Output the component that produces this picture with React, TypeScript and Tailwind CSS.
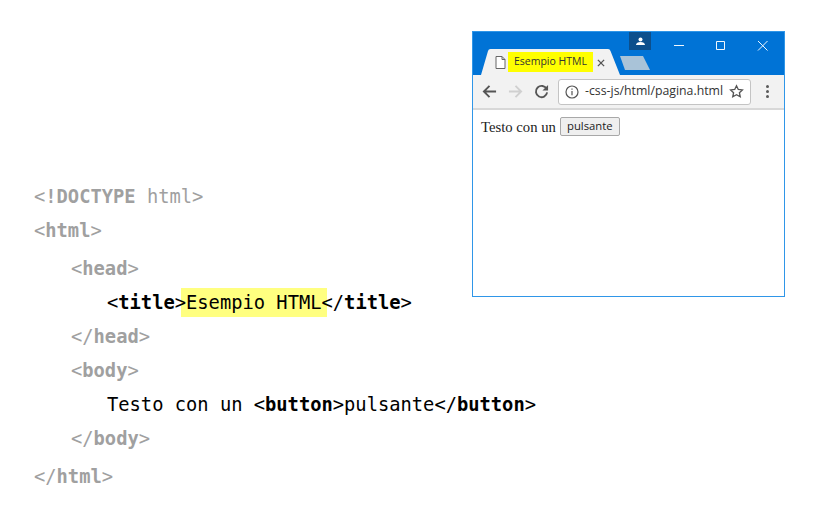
const mono = "font-['DejaVu_Sans_Mono',monospace] text-[18.75px] leading-[26px] whitespace-pre";

function Tag({ open = '<', name, close = '>', dark = false }: { open?: string; name: string; close?: string; dark?: boolean }) {
  return (
    <span className={dark ? 'text-black' : 'text-[#a0a0a0]'}>
      {open}
      <span className={dark ? 'font-bold text-black' : 'font-bold text-[#a0a0a0]'}>{name}</span>
      {close}
    </span>
  );
}

function Toolbar() {
  return (
    <div className="flex h-[35px] items-center border-b-2 border-[#d8d8d8] bg-[#f2f2f2]">
      <svg className="ml-[9px] h-[15px] w-[15px]" viewBox="0 0 16 16" fill="none" stroke="#555" strokeWidth="2">
        <path d="M15 8H2M8 2 2 8l6 6" />
      </svg>
      <svg className="ml-[11px] h-[15px] w-[15px]" viewBox="0 0 16 16" fill="none" stroke="#d0d0d0" strokeWidth="2">
        <path d="M1 8h13M8 2l6 6-6 6" />
      </svg>
      <svg className="ml-[11px] h-[15px] w-[15px]" viewBox="0 0 16 16" fill="none" stroke="#555" strokeWidth="2">
        <path d="M13.500 5.500A6 6 0 1 0 14 9" />
        <path d="M15 1v6H9z" fill="#555" stroke="none" />
      </svg>
      <div className="ml-[9px] flex h-[26px] w-[193px] items-center rounded-[3px] border border-[#c4c4c4] bg-white">
        <svg className="ml-[6px] h-[14px] w-[14px] shrink-0" viewBox="0 0 14 14" fill="none" stroke="#555" strokeWidth="1.2">
          <circle cx="7" cy="7" r="6" />
          <path d="M7 6v4.200M7 3.400v1.400" />
        </svg>
        <span className="ml-[6px] font-['Open_Sans',sans-serif] text-[12.3px] whitespace-nowrap text-[#333]">-css-js/html/pagina.html</span>
        <svg className="ml-[6px] h-[15px] w-[15px] shrink-0" viewBox="0 0 16 16" fill="none" stroke="#555" strokeWidth="1.4">
          <path d="m8 1.800 1.900 4 4.400.5-3.200 3 .9 4.400L8 11.500l-4 2.200.9-4.400-3.200-3 4.400-.5z" />
        </svg>
      </div>
      <div className="ml-[15px] flex flex-col gap-[2px]">
        <span className="h-[3px] w-[3px] rounded-full bg-[#5a5a5a]" />
        <span className="h-[3px] w-[3px] rounded-full bg-[#5a5a5a]" />
        <span className="h-[3px] w-[3px] rounded-full bg-[#5a5a5a]" />
      </div>
    </div>
  );
}

function BrowserWindow() {
  return (
    <div className="flex h-[266px] w-[313px] shrink-0 flex-col border border-[#2f96e8] bg-white">
      <div className="relative h-[43px] bg-[#0073d6]">
        {/* tab shapes */}
        <svg className="absolute bottom-0 left-[5px]" width="180" height="27" viewBox="0 0 180 27">
          <path d="M3 27 10 3q.5-2 2.500-2H130q2 0 2.500 2L142 27z" fill="#f2f2f2" />
          <path d="M142 8h23l7 14h-25z" fill="#a9c3d8" />
        </svg>
        <svg className="absolute top-[24px] left-[22px]" width="11" height="13" viewBox="0 0 11 13" fill="#fff" stroke="#666">
          <path d="M1 .5h6l3 3v9H1zM7 .5v3h3" />
        </svg>
        <span className="absolute top-[20px] left-[35px] flex h-[20px] w-[85px] items-center justify-center bg-[#ffff00] font-['Open_Sans',sans-serif] text-[10.5px] whitespace-nowrap text-[#333]">
          Esempio HTML
        </span>
        <svg className="absolute top-[27px] left-[124px]" width="8" height="8" viewBox="0 0 9 9" stroke="#555" strokeWidth="1.5">
          <path d="m1 1 7 7M8 1 1 8" />
        </svg>
        <div className="absolute top-0 left-[156px] flex h-[18px] w-[22px] items-center justify-center bg-[#0c4f8c]">
          <svg width="9" height="9" viewBox="0 0 9 9" fill="#fff">
            <circle cx="4.500" cy="2.500" r="2" />
            <path d="M0 8c0-2 2-3 4.500-3S9 6 9 8z" />
          </svg>
        </div>
        <svg className="absolute top-[8px] left-[200px]" width="100" height="12" viewBox="0 0 100 12" fill="none" stroke="#f0f7fd" strokeWidth="1">
          <path d="M1 5.500h10M43.500 1.500h8v8h-8zM85 1l9.500 9.500M94.500 1 85 10.500" />
        </svg>
      </div>
      <Toolbar />
      <div className="flex items-center pt-[7px] pl-[8px]">
        <span className="font-['Liberation_Serif',serif] text-[14.7px] leading-[18px] whitespace-nowrap text-[#222]">Testo con un</span>
        <button className="ml-[4px] flex h-[19px] w-[60px] items-center justify-center rounded-[2px] border border-[#a8a8a8] bg-[#efefef] font-['Open_Sans',sans-serif] text-[11.3px] text-[#222]">
          pulsante
        </button>
      </div>
    </div>
  );
}

export default function App() {
  return (
    <div className="flex h-[524px] w-[816px] overflow-hidden bg-white pt-[31px]">
      <div className={`isolate w-[472px] shrink-0 pt-[153px] pl-[34px] ${mono}`}>
        <div className="mb-[8px]">
          <span className="text-[#a0a0a0]">{'<'}<b>!DOCTYPE</b> html{'>'}</span>
        </div>
        <div className="mb-[12px]"><Tag name="html" /></div>
        <div className="mb-[8px] pl-[37px]"><Tag name="head" /></div>
        <div className="mb-[8px] pl-[73px] text-black">
          <Tag name="title" dark />
          <span className="relative -z-10 -mx-[5px] bg-[#ffff80] px-[5px] py-[4px]">Esempio HTML</span>
          <Tag open="</" name="title" dark />
        </div>
        <div className="mb-[8px] pl-[37px]"><Tag open="</" name="head" /></div>
        <div className="mb-[8px] pl-[37px]"><Tag name="body" /></div>
        <div className="mb-[8px] pl-[73px] text-black">
          Testo con un <Tag name="button" dark />pulsante<Tag open="</" name="button" dark />
        </div>
        <div className="mb-[12px] pl-[37px]"><Tag open="</" name="body" /></div>
        <div><Tag open="</" name="html" /></div>
      </div>
      <BrowserWindow />
    </div>
  );
}
